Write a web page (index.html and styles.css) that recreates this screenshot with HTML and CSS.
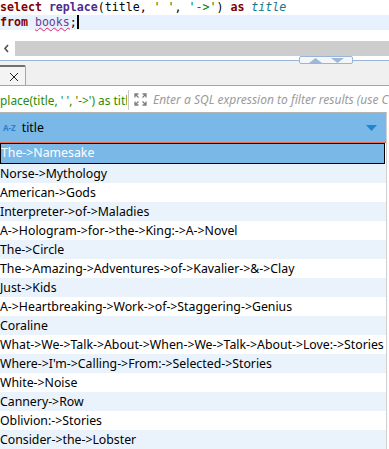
FILE: index.html
```html
<!DOCTYPE html>
<html lang="en">
<head>
    <meta charset="UTF-8">
    <title>SQL Editor</title>
    <link rel="stylesheet" href="styles.css">
</head>
<body>
    <!-- SQL editor -->
    <div class="editor">
        <div class="line"><span class="kw">select</span> <span class="fn">replace</span>(title, <span class="str">' '</span>, <span class="str">'-&gt;'</span>) <span class="kw">as</span> <span class="alias">title</span></div>
        <div class="line current"><span class="kw">from</span> <span class="tbl">books</span>;<span class="caret"></span></div>
    </div>

    <div class="hscroll">
        <svg class="arrow" width="15" height="15" viewBox="0 0 15 15"><path d="M8 4 L5 7.5 L8 11" fill="none" stroke="#505050" stroke-width="1.6"/></svg>
        <div class="thumb"></div>
    </div>

    <div class="sash">
        <div class="sash-line"></div>
        <div class="sash-btns">
            <svg width="13" height="5" viewBox="0 0 13 5"><path d="M0 5 L6.5 0 L13 5 Z" fill="#9cb9da"/></svg>
            <svg width="13" height="5" viewBox="0 0 13 5"><path d="M0 0 L13 0 L6.5 5 Z" fill="#9cb9da"/></svg>
        </div>
        <div class="sash-line short"></div>
    </div>

    <!-- Results -->
    <div class="tabs">
        <div class="tab">
            <svg width="10" height="10" viewBox="0 0 10 10"><path d="M1 1 L9 9 M9 1 L1 9" stroke="#222" stroke-width="1"/></svg>
        </div>
    </div>

    <div class="filter">
        <div class="filter-text">place(title, ' ', '-&gt;') as titl</div>
        <div class="sep"></div>
        <svg class="expand" width="13" height="13" viewBox="0 0 13 13">
            <g fill="none" stroke="#7d7d7d" stroke-width="1.3">
                <path d="M1 4.5 V1 H4.5 M1 1 L4.5 4.5"/>
                <path d="M8.5 1 H12 V4.5 M12 1 L8.5 4.5"/>
                <path d="M1 8.5 V12 H4.5 M1 12 L4.5 8.5"/>
                <path d="M8.5 12 H12 V8.5 M12 12 L8.5 8.5"/>
            </g>
        </svg>
        <div class="placeholder">Enter a SQL expression to filter results (use Ctrl+Space)</div>
    </div>

    <div class="grid">
        <div class="grid-header">
            <span class="az">A-Z</span>
            <span class="col-name">title</span>
            <svg class="sort" width="11" height="6" viewBox="0 0 11 6"><path d="M0 0 H11 L5.5 6 Z" fill="#1b87d2"/></svg>
        </div>
        <div class="row selected">The-&gt;Namesake</div>
        <div class="row">Norse-&gt;Mythology</div>
        <div class="row">American-&gt;Gods</div>
        <div class="row">Interpreter-&gt;of-&gt;Maladies</div>
        <div class="row">A-&gt;Hologram-&gt;for-&gt;the-&gt;King:-&gt;A-&gt;Novel</div>
        <div class="row">The-&gt;Circle</div>
        <div class="row">The-&gt;Amazing-&gt;Adventures-&gt;of-&gt;Kavalier-&gt;&amp;-&gt;Clay</div>
        <div class="row">Just-&gt;Kids</div>
        <div class="row">A-&gt;Heartbreaking-&gt;Work-&gt;of-&gt;Staggering-&gt;Genius</div>
        <div class="row">Coraline</div>
        <div class="row">What-&gt;We-&gt;Talk-&gt;About-&gt;When-&gt;We-&gt;Talk-&gt;About-&gt;Love:-&gt;Stories</div>
        <div class="row">Where-&gt;I'm-&gt;Calling-&gt;From:-&gt;Selected-&gt;Stories</div>
        <div class="row">White-&gt;Noise</div>
        <div class="row">Cannery-&gt;Row</div>
        <div class="row">Oblivion:-&gt;Stories</div>
        <div class="row">Consider-&gt;the-&gt;Lobster</div>
        <div class="row"></div>
    </div>
</body>
</html>
```

FILE: styles.css
```css
body {
    margin: 0;
    width: 389px;
    height: 449px;
    overflow: hidden;
    background-color: #fff;
    font-family: "Noto Sans", "Open Sans", sans-serif;
    font-size: 12.3px;
}
/* Editor */
.editor {
    height: 38px;
    font-family: "DejaVu Sans Mono", monospace;
    font-size: 11.6px;
    color: #000;
}
.editor .line {
    height: 15px;
    line-height: 15px;
    white-space: pre;
}
.editor .line.current {
    background-color: #e8f2fe;
}
.kw {
    color: #7f0000;
    font-weight: bold;
}
.fn {
    color: #4e2a8e;
    font-weight: bold;
}
.str {
    color: #008000;
}
.alias {
    color: #11788f;
    font-style: italic;
}
.tbl {
    color: #6a3d8f;
    text-decoration: underline wavy #e0206a;
    text-decoration-thickness: 1px;
}
.caret {
    display: inline-block;
    width: 2px;
    height: 14px;
    background-color: #000;
    vertical-align: -3px;
}
.hscroll {
    display: flex;
    align-items: flex-start;
    height: 15px;
    padding-top: 3px;
}
.hscroll .arrow {
    flex: none;
}
.hscroll .thumb {
    flex: 1;
    height: 15px;
    background-color: #cdcdcd;
}
/* Sash between editor and results */
.sash {
    display: flex;
    align-items: center;
    height: 8px;
    background: linear-gradient(#fff 4px, #f0f0f0 4px);
}
.sash-line {
    flex: 1;
    height: 1px;
    background-color: #9ab6d6;
}
.sash-line.short {
    flex: none;
    width: 36px;
}
.sash-btns {
    display: flex;
    align-items: center;
    justify-content: center;
    gap: 9px;
    width: 52px;
    height: 6px;
    border: 1px solid #9ab6d6;
    border-radius: 2px;
    background-color: #f4f6f9;
}
.tabs {
    height: 20px;
    padding-top: 1px;
    background-color: #f0f0f0;
    border-bottom: 1px solid #a6a6a6;
}
.tab {
    display: flex;
    align-items: center;
    justify-content: center;
    width: 26px;
    height: 20px;
    padding: 2px 0 0 2px;
    box-sizing: border-box;
    border-top: 2px solid #707070;
    border-right: 1px solid #a6a6a6;
    border-top-right-radius: 2px;
    background-color: #f4f4f4;
}
.filter {
    display: flex;
    align-items: center;
    height: 23px;
    padding-top: 2px;
    background-color: #fff;
    overflow: hidden;
}
.filter-text {
    flex: none;
    width: 127px;
    overflow: hidden;
    white-space: pre;
    font-size: 11.9px;
    color: #2e8b00;
}
.filter .sep {
    flex: none;
    width: 1px;
    height: 20px;
    margin-left: 1px;
    background-color: #c8c8c8;
}
.filter .expand {
    flex: none;
    margin-left: 5px;
}
.placeholder {
    flex: none;
    margin-left: 6px;
    white-space: nowrap;
    font-style: italic;
    font-size: 12px;
    color: #9b9b9b;
}
/* Result grid */
.grid {
    width: 386px;
    border-top: 1px solid #b4b4b4;
    border-right: 1px solid #cfcfcf;
    margin-top: 1px;
}
.grid-header {
    display: flex;
    align-items: center;
    height: 29px;
    background-color: #7ab8e8;
    border-bottom: 1px solid #ee6d4f;
}
.az {
    margin-left: 3px;
    font-size: 8px;
    font-weight: bold;
    color: #2f80cc;
}
.col-name {
    margin-left: 6px;
    color: #000;
}
.grid-header .sort {
    margin-left: auto;
    margin-right: 9px;
}
.row {
    height: 19px;
    line-height: 19px;
    white-space: nowrap;
    overflow: hidden;
    color: #000;
}
.row:nth-child(odd) {
    background-color: #eaf3fc;
}
.row:nth-child(even) {
    background-color: #fff;
}
.row.selected {
    background-color: #7ab8e8;
    color: #fff;
    border: 1px solid #000;
    line-height: 17px;
    margin-right: 1px;
}
```
